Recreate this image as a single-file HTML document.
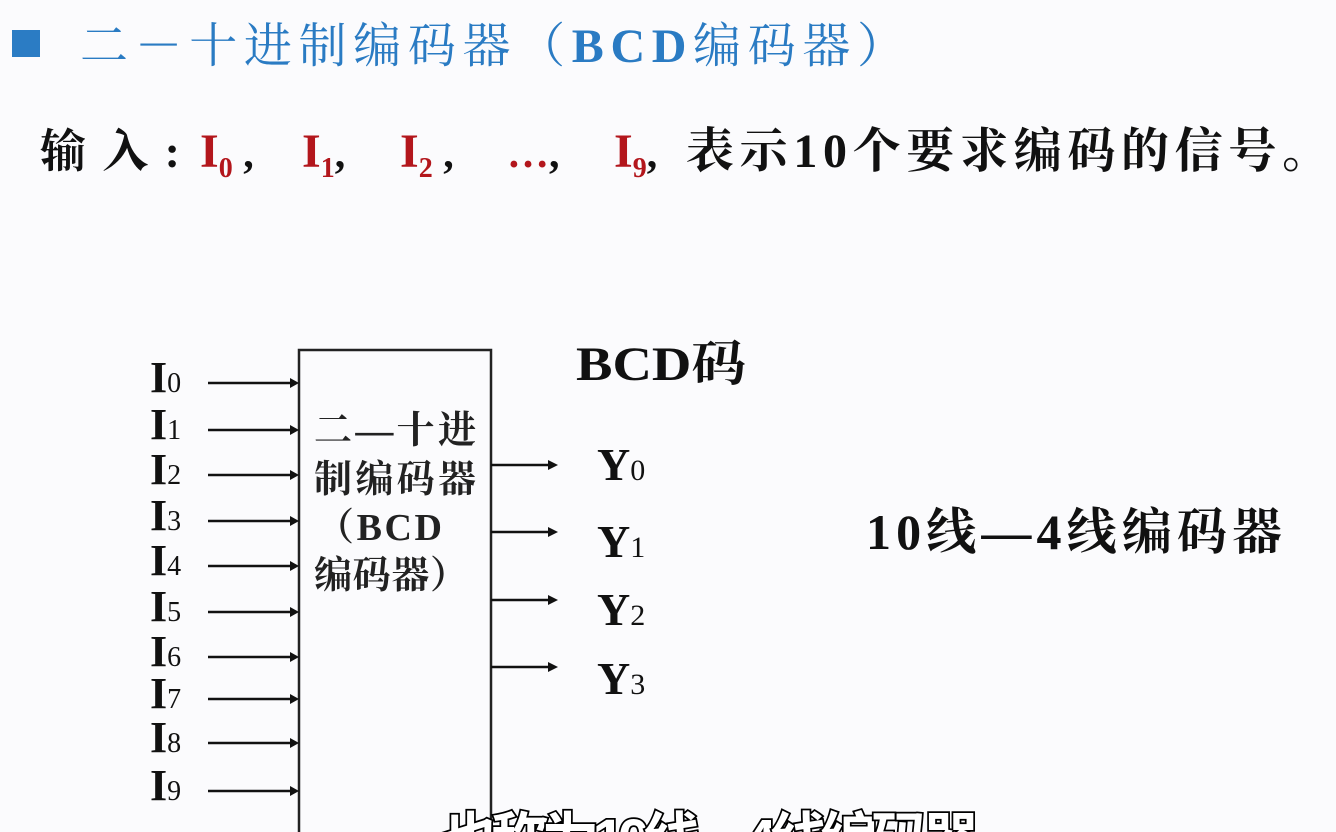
<!DOCTYPE html>
<html><head><meta charset="utf-8"><style>
html,body{margin:0;padding:0;background:#fbfbfd;overflow:hidden}
svg{display:block}
.cn{font-family:"Liberation Serif","Noto Serif CJK SC",serif}
</style></head><body>
<svg width="1336" height="832" viewBox="0 0 1336 832" xmlns="http://www.w3.org/2000/svg" class="cn">
<rect width="1336" height="832" fill="#fbfbfd"/>
<rect x="12" y="30" width="28" height="27" fill="#2b7cc4"/>
<text x="80" y="62" font-size="48" fill="#2a7bc3" textLength="825" lengthAdjust="spacing">二－十进制编码器（<tspan font-weight="bold">BCD</tspan>编码器）</text>
<g font-weight="bold" font-size="48" fill="#111">
<text x="40" y="167" font-size="46" textLength="140" lengthAdjust="spacing">输入:</text>
<g fill="#b3161c">
<text x="200" y="167" font-size="48">I<tspan font-size="28" dy="10">0</tspan><tspan font-size="42" dy="-10" fill="#111"> ,</tspan></text>
<text x="302" y="167" font-size="48">I<tspan font-size="28" dy="10">1</tspan><tspan font-size="42" dy="-10" fill="#111">,</tspan></text>
<text x="400" y="167" font-size="48">I<tspan font-size="28" dy="10">2</tspan><tspan font-size="42" dy="-10" fill="#111"> ,</tspan></text>
<text x="507" y="167" font-size="42">…<tspan fill="#111">,</tspan></text>
<text x="614" y="167" font-size="48">I<tspan font-size="28" dy="10">9</tspan><tspan font-size="42" dy="-10" fill="#111">,</tspan></text>
</g>
<text x="686" y="167" textLength="644" lengthAdjust="spacing">表示10个要求编码的信号。</text>
</g>
<rect x="299" y="350" width="192" height="490" fill="none" stroke="#222" stroke-width="2.5"/>
<g font-size="38" font-weight="bold" fill="#222">
<text x="314" y="443" textLength="162" lengthAdjust="spacing">二—十进</text>
<text x="314" y="492" textLength="162" lengthAdjust="spacing">制编码器</text>
<text x="316" y="540" textLength="126" lengthAdjust="spacing">（BCD</text>
<text x="314" y="588" textLength="154" lengthAdjust="spacing">编码器）</text>
</g>
<g stroke="#111" stroke-width="2.5">
<line x1="208" y1="383" x2="292" y2="383"/><line x1="208" y1="430" x2="292" y2="430"/>
<line x1="208" y1="475" x2="292" y2="475"/><line x1="208" y1="521" x2="292" y2="521"/>
<line x1="208" y1="566" x2="292" y2="566"/><line x1="208" y1="612" x2="292" y2="612"/>
<line x1="208" y1="657" x2="292" y2="657"/><line x1="208" y1="699" x2="292" y2="699"/>
<line x1="208" y1="743" x2="292" y2="743"/><line x1="208" y1="791" x2="292" y2="791"/>
<line x1="491" y1="465" x2="550" y2="465"/><line x1="491" y1="532" x2="550" y2="532"/>
<line x1="491" y1="600" x2="550" y2="600"/><line x1="491" y1="667" x2="550" y2="667"/>
</g>
<g fill="#111">
<path d="M290 378L299 383L290 388Z"/><path d="M290 425L299 430L290 435Z"/>
<path d="M290 470L299 475L290 480Z"/><path d="M290 516L299 521L290 526Z"/>
<path d="M290 561L299 566L290 571Z"/><path d="M290 607L299 612L290 617Z"/>
<path d="M290 652L299 657L290 662Z"/><path d="M290 694L299 699L290 704Z"/>
<path d="M290 738L299 743L290 748Z"/><path d="M290 786L299 791L290 796Z"/>
<path d="M548 460L558 465L548 470Z"/><path d="M548 527L558 532L548 537Z"/>
<path d="M548 595L558 600L548 605Z"/><path d="M548 662L558 667L548 672Z"/>
</g>
<g fill="#111" font-size="44" font-weight="bold">
<text x="150" y="392">I<tspan font-size="28" font-weight="normal">0</tspan></text>
<text x="150" y="439">I<tspan font-size="28" font-weight="normal">1</tspan></text>
<text x="150" y="484">I<tspan font-size="28" font-weight="normal">2</tspan></text>
<text x="150" y="530">I<tspan font-size="28" font-weight="normal">3</tspan></text>
<text x="150" y="575">I<tspan font-size="28" font-weight="normal">4</tspan></text>
<text x="150" y="621">I<tspan font-size="28" font-weight="normal">5</tspan></text>
<text x="150" y="666">I<tspan font-size="28" font-weight="normal">6</tspan></text>
<text x="150" y="708">I<tspan font-size="28" font-weight="normal">7</tspan></text>
<text x="150" y="752">I<tspan font-size="28" font-weight="normal">8</tspan></text>
<text x="150" y="800">I<tspan font-size="28" font-weight="normal">9</tspan></text>
<text x="597" y="480" font-size="46">Y<tspan font-size="30" font-weight="normal">0</tspan></text>
<text x="597" y="557" font-size="46">Y<tspan font-size="30" font-weight="normal">1</tspan></text>
<text x="597" y="625" font-size="46">Y<tspan font-size="30" font-weight="normal">2</tspan></text>
<text x="597" y="694" font-size="46">Y<tspan font-size="30" font-weight="normal">3</tspan></text>
<text x="576" y="380" font-size="48" textLength="170" lengthAdjust="spacingAndGlyphs">BCD码</text>
<text x="866" y="549" font-size="50" textLength="416" lengthAdjust="spacing">10线—4线编码器</text>
</g>
<text x="440" y="860" font-family="Liberation Sans,'Noto Sans CJK SC',sans-serif" font-weight="bold" font-size="58" fill="#fff" stroke="#000" stroke-width="3.5" paint-order="stroke" textLength="540" lengthAdjust="spacing">也称为10线—4线编码器</text>
</svg>
</body></html>
